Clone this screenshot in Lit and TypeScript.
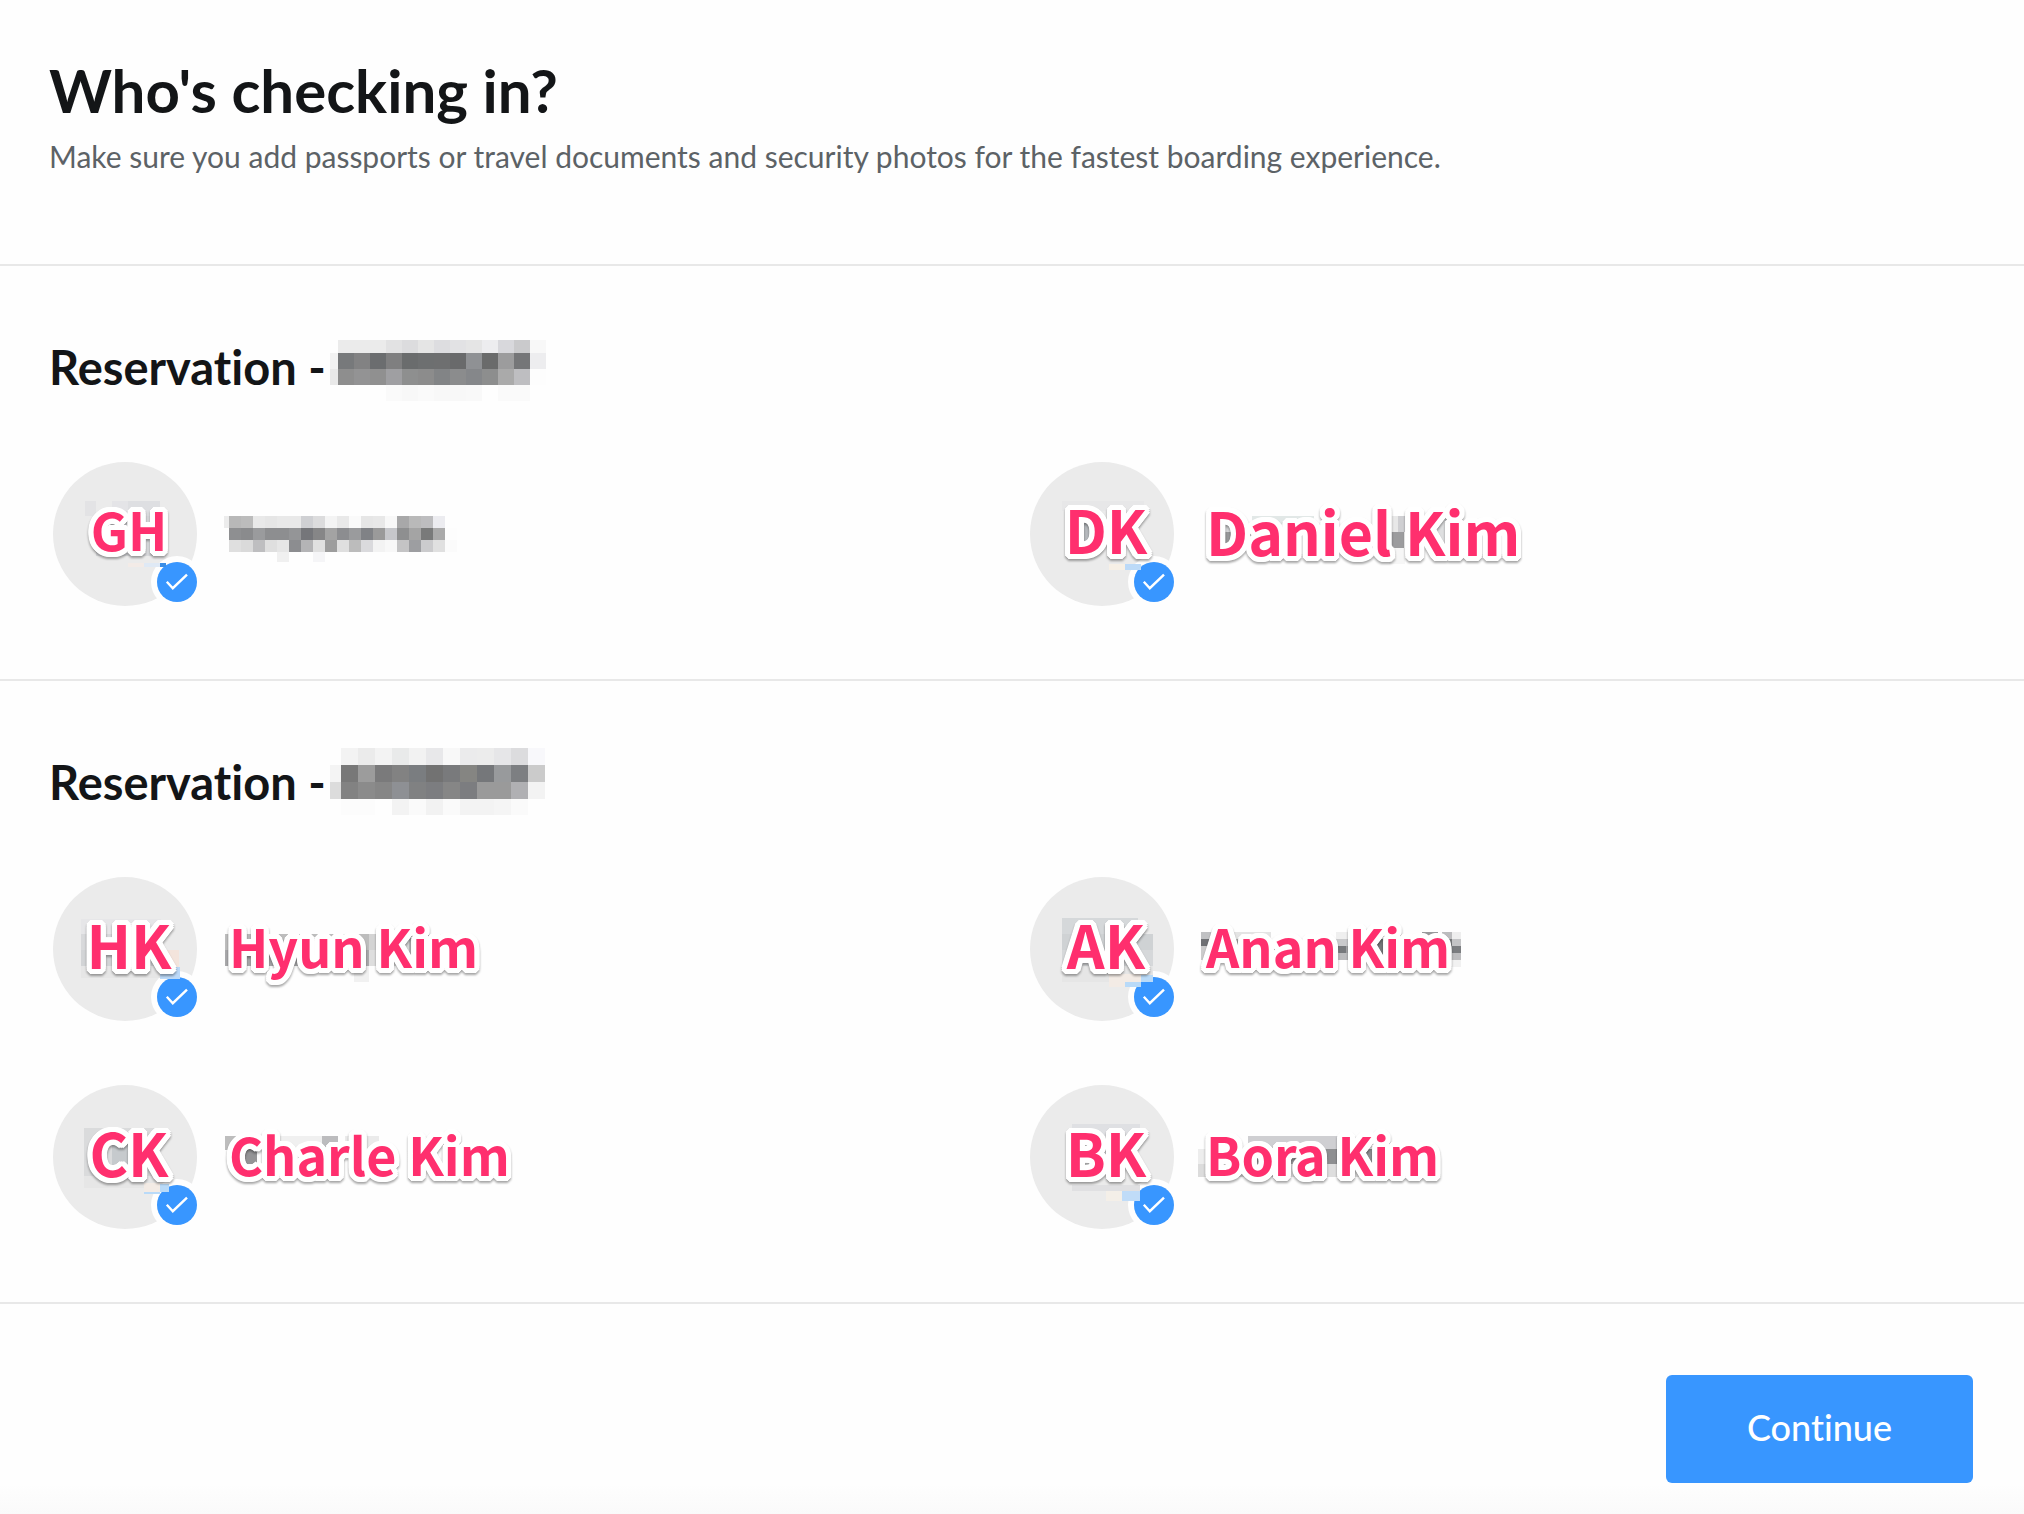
import { LitElement, html, svg, css } from "lit";
import { customElement, property } from "lit/decorators.js";

type Rect = [x: number, y: number, w: number, h: number, color: string];

interface Mosaic {
  left: number;
  cell: number;
  right: number;
  rows: [height: number, colors: string][];
}

interface Passenger {
  initials: string;
  name: string;
  initialsSize: "large" | "regular";
  nameSize: "large" | "regular";
  patches: Rect[];
  mosaic?: Mosaic;
}

interface Reservation {
  mosaic: Mosaic;
  passengers: Passenger[];
}

const codeA: Mosaic = {
  left: 8,
  cell: 16,
  right: 16,
  rows: [
    [13, "fefefe ebebeb ebebeb ebebeb e2e2e3 dcdcde e5e5e5 dddde0 e2e2e4 e5e5e5 ededef d8d8dc cacacc f8f8f8"],
    [16, "f2f2f2 77797b 828283 6b6d6f 7f7f80 6a6c6d 6d6f70 6e6f70 696a6b 8f9194 6a6b6b 9c9c9d 757678 ededef"],
    [16, "e9e9e9 8e8e8e 939394 909090 9f9fa2 8e8f8f 8c8c8c 828486 8b8c8d 85878a 8d8e8e aaaaaa bebec1 fdfdfd"],
    [16, "fefefe fefefe fefefe fefefe fafafa f8f8f8 fafafa f8f8f8 f8f8f8 f9f9f9 fefefe fafafa fafafa fefefe"],
  ],
};

const codeB: Mosaic = {
  left: 11,
  cell: 17,
  right: 17,
  rows: [
    [17, "fefefe f3f3f3 ebebeb f3f3f3 e9eaea f2f2f2 e8e8ea f8f8f8 ebebec ececec e6e6e8 dcdcde f8f8fb"],
    [17, "f4f4f4 787878 9c9c9c 7a7a7b 828282 7a7d80 727272 797a7c 858582 75777a 989a9c 7d7f82 cbcbcb"],
    [17, "dcdcdc 828282 8b8b8b 868686 8e9094 808182 7c7d80 868686 7c7d80 9a9a9a 9a9a9a b0b0b3 f3f3f3"],
    [16, "fefefe fcfcfc fcfcfc fefefe f3f3f3 fafafa f2f2f2 fafafa f3f3f3 f3f3f3 f5f5f5 fafafa fefefe"],
    [8, "fefefe fefefe fefefe fefefe fefefe fefefe fefefe fefefe fefefe fefefe fefefe fefefe fefefe"],
  ],
};

const nameMosaic: Mosaic = {
  left: 5,
  cell: 12,
  right: 12,
  rows: [
    [12, "ececec b8b8b8 bcbcbc e9e9e9 e6e6e6 e9e9e9 e9e9e9 cfd0d3 dcdcdd f4f4f4 e9e9e9 fafafa e6e6e6 e8e8e8 f8f8f8 a8a8a9 b9b9b9 bdbdbf ececf0 fefefe"],
    [12, "fefefe 8e8f91 8a8b8d 9a9b9d 8d8e90 8d8e90 949597 75767a 868687 a3a3a3 8c8d90 9a9b9d 808286 9a9a9a c6c7cb 8e8f90 a4a4a4 797a7a aaaaaa fdfdfd"],
    [12, "fefefe dfdfdf dadada bebec0 dfdfdf e6e6e6 8c8d90 b4b4b6 e0e0e0 9d9d9d dfdfdf bcbcbc dadadd f3f3f3 f8f8f8 c4c4c5 9d9ea1 cbcbcd e0e0e0 fbfbfb"],
    [10, "fefefe fefefe fefefe fefefe fefefe f0f0f0 fefefe fefefe f5f5f7 fefefe fefefe fefefe fefefe fefefe fefefe fefefe fefefe fefefe fefefe fefefe"],
  ],
};

const reservations: Reservation[] = [
  {
    mosaic: codeA,
    passengers: [
      {
        initials: "GH",
        name: "",
        initialsSize: "regular",
        nameSize: "regular",
        mosaic: nameMosaic,
        patches: [
          [32, 39, 11, 15, "#e3e3e5"],
          [59, 39, 16, 15, "#e4e4e7"],
          [75, 39, 32, 15, "#dedfe2"],
          [43, 54, 64, 40, "#d9dadd"],
          [75, 101, 16, 4, "#f3ebe7"],
          [91, 101, 16, 4, "#dfe9f5"],
          [107, 101, 6, 4, "#3b8ee6"],
        ],
      },
      {
        initials: "DK",
        name: "Daniel Kim",
        initialsSize: "large",
        nameSize: "large",
        patches: [
          [32, 39, 82, 10, "#e7e7e8"],
          [50, 58, 14, 26, "#b5b9bd"],
          [79, 102, 16, 6, "#f7f0e6"],
          [95, 102, 16, 6, "#bcdaf8"],
          [192, 54, 14, 16, "#d8d8da"],
          [192, 70, 14, 16, "#98989a"],
          [222, 54, 62, 8, "#e2e8e7"],
          [352, 54, 16, 16, "#e8e8e8"],
          [368, 54, 14, 16, "#cfcfd2"],
          [352, 70, 22, 16, "#9c9c9e"],
          [359, 86, 16, 16, "#f6f6f6"],
          [400, 54, 20, 32, "#dedfe0"],
        ],
      },
    ],
  },
  {
    mosaic: codeB,
    passengers: [
      {
        initials: "HK",
        name: "Hyun Kim",
        initialsSize: "large",
        nameSize: "regular",
        patches: [
          [28, 42, 80, 15, "#e6e6e8"],
          [28, 57, 80, 16, "#d8d9db"],
          [28, 73, 80, 16, "#d2d4d6"],
          [28, 89, 80, 12, "#e6e6e6"],
          [108, 73, 18, 17, "#f3e4dc"],
          [107, 90, 20, 12, "#bcd9f8"],
          [172, 57, 144, 16, "#bdbdbd"],
          [172, 73, 144, 16, "#a9a9ab"],
          [316, 57, 40, 16, "#d4d4d4"],
          [316, 73, 40, 16, "#dedede"],
          [356, 57, 20, 26, "#b4b4b6"],
          [380, 57, 16, 10, "#efefef"],
          [301, 89, 15, 16, "#f1f1f1"],
        ],
      },
      {
        initials: "AK",
        name: "Anan Kim",
        initialsSize: "large",
        nameSize: "regular",
        patches: [
          [32, 41, 76, 16, "#d5d8da"],
          [32, 57, 91, 16, "#cfd2d4"],
          [32, 73, 91, 16, "#d6d8da"],
          [32, 89, 91, 16, "#e6e6e6"],
          [79, 97, 32, 13, "#f3ebe5"],
          [95, 105, 16, 5, "#b9daf8"],
          [111, 98, 12, 7, "#b9daf8"],
          [171, 55, 10, 7, "#c0c1c3"],
          [181, 55, 60, 7, "#e4e4e4"],
          [171, 62, 10, 7, "#6f7174"],
          [181, 62, 30, 7, "#a5a5a5"],
          [171, 69, 14, 14, "#cccccc"],
          [306, 55, 20, 7, "#efefef"],
          [306, 62, 16, 7, "#cacacc"],
          [306, 69, 10, 7, "#77797c"],
          [316, 69, 12, 7, "#a5a5a7"],
          [306, 76, 20, 7, "#bcbcbe"],
          [344, 62, 12, 20, "#77797b"],
          [392, 55, 16, 4, "#98999b"],
          [412, 55, 10, 7, "#bcbcbe"],
          [422, 55, 9, 7, "#eeeeee"],
          [412, 62, 10, 7, "#77797b"],
          [422, 62, 9, 7, "#c4c4c6"],
          [412, 69, 10, 7, "#a8a8aa"],
          [422, 69, 9, 7, "#7b7d80"],
          [412, 76, 19, 7, "#bdbdbf"],
          [412, 83, 19, 7, "#f1f1f1"],
        ],
      },
      {
        initials: "CK",
        name: "Charle Kim",
        initialsSize: "large",
        nameSize: "regular",
        patches: [
          [31, 43, 76, 48, "#dadbdc"],
          [59, 56, 16, 24, "#c6cacd"],
          [31, 91, 76, 12, "#e6e6e6"],
          [91, 98, 16, 9, "#f3ebe5"],
          [107, 99, 9, 8, "#b9daf8"],
          [91, 107, 16, 2, "#b9daf8"],
          [172, 51, 12, 14, "#bdbdbd"],
          [184, 60, 20, 19, "#949496"],
          [219, 51, 50, 13, "#f0f0f0"],
          [269, 51, 16, 28, "#bcbcbe"],
          [292, 51, 34, 13, "#ebebeb"],
          [326, 64, 14, 15, "#e9e9e9"],
          [326, 79, 14, 13, "#f6f6f6"],
        ],
      },
      {
        initials: "BK",
        name: "Bora Kim",
        initialsSize: "large",
        nameSize: "regular",
        patches: [
          [42, 39, 68, 12, "#dfe0e3"],
          [42, 100, 68, 6, "#e0e0e2"],
          [76, 106, 16, 10, "#f4efe8"],
          [92, 106, 18, 10, "#c0dcf8"],
          [168, 64, 15, 15, "#ededed"],
          [168, 79, 15, 13, "#dcdcdc"],
          [183, 64, 112, 15, "#98989a"],
          [183, 79, 160, 13, "#dedede"],
          [218, 51, 90, 13, "#cfcfd2"],
          [295, 64, 48, 15, "#8e8f91"],
        ],
      },
    ],
  },
];

@customElement("pixel-mosaic")
class PixelMosaic extends LitElement {
  static styles = css`
    :host {
      display: block;
      flex: none;
    }
    .grid {
      display: block;
    }
  `;

  @property({ attribute: false }) data!: Mosaic;

  render() {
    const { left, cell, right, rows } = this.data;
    const count = rows[0][1].split(" ").length;
    const width = left + cell * (count - 2) + right;
    const height = rows.reduce((sum, [h]) => sum + h, 0);
    let y = 0;
    const rects = rows.map(([h, colors]) => {
      const top = y;
      y += h;
      return colors.split(" ").map((color, i) => {
        const x = i === 0 ? 0 : left + cell * (i - 1);
        const w = i === 0 ? left : i === count - 1 ? right : cell;
        return svg`<rect x=${x} y=${top} width=${w} height=${h} fill=${"#" + color} />`;
      });
    });
    return html`<svg class="grid" width=${width} height=${height} shape-rendering="crispEdges" aria-hidden="true">${rects}</svg>`;
  }
}

@customElement("passenger-item")
class PassengerItem extends LitElement {
  static styles = css`
    :host {
      display: block;
    }
    .item {
      position: relative;
      display: flex;
      align-items: center;
      height: 144px;
    }
    .avatar {
      position: relative;
      flex: none;
      display: flex;
      align-items: center;
      justify-content: center;
      box-sizing: border-box;
      width: 144px;
      height: 144px;
      padding: 0 0 10px 8px;
      border-radius: 50%;
      background: #ebebeb;
    }
    .badge {
      position: absolute;
      right: 0;
      bottom: 4px;
      width: 40px;
      height: 40px;
      border-radius: 50%;
      box-shadow: 0 0 0 6px #fefefe;
    }
    .check {
      appearance: none;
      display: block;
      width: 40px;
      height: 40px;
      margin: 0;
      border-radius: 50%;
      background: #3896ff;
      cursor: pointer;
    }
    .tick {
      position: absolute;
      inset: 0;
      pointer-events: none;
    }
    .patches {
      position: absolute;
      left: 0;
      top: 0;
      pointer-events: none;
    }
    .label {
      position: relative;
      color: #ff2f6e;
      font-family: "Noto Sans CJK KR", "Noto Sans", sans-serif;
      font-weight: 700;
      line-height: 64px;
      white-space: nowrap;
      text-shadow: 5px 0 #fff, 5px 2px #fff, 4px 3px #fff, 3px 4px #fff, 2px 5px #fff, 0 5px #fff,
        -2px 5px #fff, -3px 4px #fff, -4px 3px #fff, -5px 2px #fff, -5px 0 #fff, -5px -2px #fff,
        -4px -3px #fff, -3px -4px #fff, -2px -5px #fff, 0 -5px #fff, 2px -5px #fff, 3px -4px #fff,
        4px -3px #fff, 5px -2px #fff;
      filter: drop-shadow(0 2px 1px rgba(0, 0, 0, 0.35));
      pointer-events: none;
    }
    .large {
      font-size: 59px;
    }
    .regular {
      font-size: 52px;
    }
    .name {
      margin: 0 0 6px 32px;
    }
    .hidden-name {
      margin: 10px 0 0 27px;
    }
  `;

  @property({ attribute: false }) data!: Passenger;

  render() {
    const p = this.data;
    return html`
      <label class="item">
        <span class="avatar">
          <span class="badge">
            <input class="check" type="checkbox" checked aria-label=${p.name || p.initials} />
            <svg class="tick" width="40" height="40" viewBox="0 0 40 40" fill="none" aria-hidden="true">
              <path d="M9.8 19.8 L15.8 26.2 L30 12.6" stroke="#ffffff" stroke-width="2.4" />
            </svg>
          </span>
          <svg class="patches" width="480" height="144" shape-rendering="crispEdges" aria-hidden="true">
            ${p.patches.map(
              ([x, y, w, h, c]) => svg`<rect x=${x} y=${y} width=${w} height=${h} fill=${c} />`
            )}
          </svg>
          <span class="label ${p.initialsSize}">${p.initials}</span>
        </span>
        ${p.mosaic
          ? html`<pixel-mosaic class="hidden-name" .data=${p.mosaic}></pixel-mosaic>`
          : html`<span class="label name ${p.nameSize}">${p.name}</span>`}
      </label>
    `;
  }
}

@customElement("app-root")
class AppRoot extends LitElement {
  static styles = css`
    :host {
      display: block;
      min-height: 100vh;
      background: #fefefe;
      color: #131517;
      font-family: Lato, "Open Sans", sans-serif;
      font-variant-ligatures: none;
    }
    .intro {
      padding: 54px 49px 88px;
      border-bottom: 2px solid #e8e8e8;
    }
    .title {
      margin: 0;
      font-size: 60px;
      line-height: 72px;
      font-weight: 700;
    }
    .lead {
      margin: 10px 0 0;
      color: #5c6266;
      font-size: 30px;
      line-height: 40px;
    }
    .reservation {
      padding: 72px 51px 73px 49px;
      border-bottom: 2px solid #e8e8e8;
    }
    .heading {
      display: flex;
      align-items: center;
      gap: 4px;
      height: 64px;
      margin: 0 0 60px;
      font-size: 47px;
      line-height: 64px;
      font-weight: 700;
    }
    .heading-text {
      padding-bottom: 6px;
    }
    .passengers {
      display: grid;
      grid-template-columns: 1fr 1fr;
      gap: 64px 34px;
      margin: 0;
      padding: 0 0 0 4px;
      list-style: none;
    }
    .actions {
      display: flex;
      justify-content: flex-end;
      padding: 71px 51px 31px;
      background: linear-gradient(to top, #fafafa, #fefefe 30px);
    }
    .continue {
      width: 307px;
      height: 108px;
      padding: 0 0 4px;
      border: 0;
      border-radius: 6px;
      background: #3896ff;
      color: #ffffff;
      font-family: inherit;
      font-size: 36px;
      line-height: 48px;
      font-weight: 500;
      font-variant-ligatures: none;
      cursor: pointer;
    }
  `;

  render() {
    return html`
      <main>
        <header class="intro">
          <h1 class="title">Who's checking in?</h1>
          <p class="lead">
            Make sure you add passports or travel documents and security photos for the fastest boarding experience.
          </p>
        </header>
        ${reservations.map(
          (r) => html`
            <section class="reservation">
              <h2 class="heading">
                <span class="heading-text">Reservation -</span>
                <pixel-mosaic .data=${r.mosaic}></pixel-mosaic>
              </h2>
              <ul class="passengers">
                ${r.passengers.map((p) => html`<li><passenger-item .data=${p}></passenger-item></li>`)}
              </ul>
            </section>
          `
        )}
        <footer class="actions">
          <button class="continue" type="button">Continue</button>
        </footer>
      </main>
    `;
  }
}
